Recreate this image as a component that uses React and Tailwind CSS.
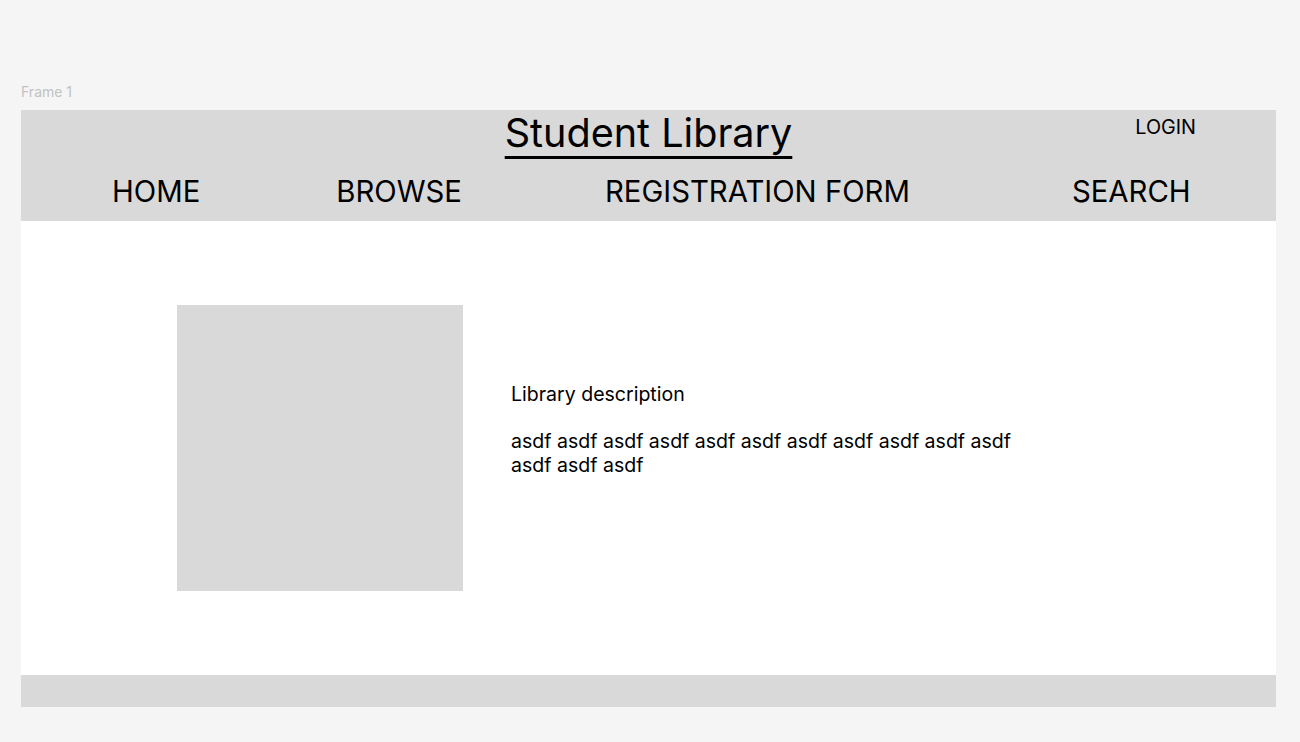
const NAV = [
  { label: 'HOME', ml: 'ml-[91px]' },
  { label: 'BROWSE', ml: 'ml-[136px]' },
  { label: 'REGISTRATION FORM', ml: 'ml-[143px]' },
  { label: 'SEARCH', ml: 'ml-[162px]' },
];

export default function App() {
  return (
    <div className="min-h-[742px] bg-[#f5f5f5] pt-[83px] pl-[21px] font-['Inter','Liberation_Sans',sans-serif] text-black">
      <div className="text-[14px] leading-[17px] font-normal text-[#c2c2c2]">Frame 1</div>

      {/* Frame */}
      <div className="mt-[10px] w-[1255px] bg-white">
        {/* Header */}
        <header className="h-[111px] bg-[#d9d9d9] flex flex-col">
          <div className="grid grid-cols-[1fr_auto_1fr] h-[44px]">
            <div />
            <h1 className="text-[39.6px] leading-[46px] font-normal underline decoration-[2.5px] underline-offset-[9px]">
              Student Library
            </h1>
            <div className="flex justify-end pr-[80px]">
              <button className="mt-[5px] h-[24px] text-[19.8px] leading-[24px]">LOGIN</button>
            </div>
          </div>
          <nav className="mt-[20px] flex items-center">
            {NAV.map((n) => (
              <a key={n.label} href="#" className={`${n.ml} text-[29.3px] leading-[36px] whitespace-nowrap`}>
                {n.label}
              </a>
            ))}
          </nav>
        </header>

        {/* Content */}
        <main className="flex items-start py-[84px] pl-[156px]">
          <div className="w-[286px] h-[286px] shrink-0 bg-[#d9d9d9]" />
          <div className="ml-[48px] mt-[77px] w-[510px] text-[19.55px] leading-[24px]">
            <p>Library description</p>
            <p className="mt-[23px]">asdf asdf asdf asdf asdf asdf asdf asdf asdf asdf asdf asdf asdf asdf</p>
          </div>
        </main>

        {/* Footer */}
        <footer className="h-[32px] bg-[#d9d9d9]" />
      </div>
    </div>
  );
}
